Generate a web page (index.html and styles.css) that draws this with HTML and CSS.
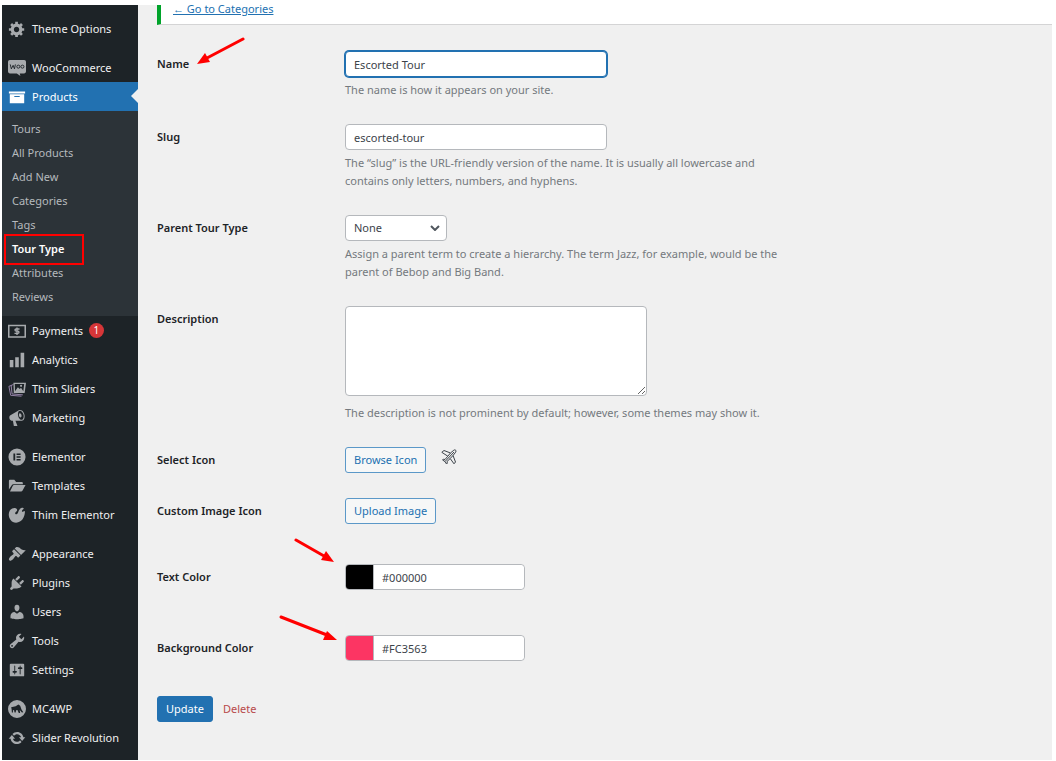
FILE: index.html
```html
<!DOCTYPE html>
<html lang="en">
	<head>
		<meta charset="UTF-8">
		<title>Edit Tour Type</title>
		<link rel="stylesheet" href="styles.css">
	</head>
	<body>
		<div class="admin">
			<nav class="sidebar">
				<ul class="menu">
					<li><a href="#"><svg viewBox="0 0 20 20"><path d="M18 12h-2.18c-.17.7-.44 1.35-.81 1.93l1.54 1.54-2.1 2.1-1.54-1.54c-.58.36-1.23.63-1.91.79V19H8v-2.18c-.68-.16-1.33-.43-1.91-.79l-1.54 1.54-2.12-2.12 1.54-1.54c-.36-.58-.63-1.23-.79-1.91H1V9.03h2.17c.16-.7.44-1.35.8-1.94L2.43 5.55l2.1-2.1 1.54 1.54c.58-.37 1.24-.64 1.93-.81V2h3v2.18c.68.16 1.33.43 1.91.79l1.54-1.54 2.12 2.12-1.54 1.54c.36.59.64 1.24.8 1.94H18V12zm-8.5 1.5c1.66 0 3-1.34 3-3s-1.34-3-3-3-3 1.34-3 3 1.34 3 3 3z"/></svg>Theme Options</a></li>
					<li class="gap"><a href="#"><svg viewBox="0 0 20 20"><path d="M2 1h16a2 2 0 0 1 2 2v11a2 2 0 0 1-2 2h-5l.8 3-4-3H2a2 2 0 0 1-2-2V3a2 2 0 0 1 2-2z"/><path class="ink" d="M2.500 6l1.200 5 2-4 1.500 4 1-5"/><circle class="ink" cx="11.500" cy="8.500" r="1.700"/><circle class="ink" cx="16" cy="8.500" r="1.700"/></svg>WooCommerce</a></li>
					<li class="current"><a href="#"><svg viewBox="0 0 20 20"><path d="M19 4v2H1V4h18zM2 7h16v10H2V7zm11 3V9H7v1h6z"/></svg>Products</a>
						<ul class="submenu">
							<li><a href="#">Tours</a></li>
							<li><a href="#">All Products</a></li>
							<li><a href="#">Add New</a></li>
							<li><a href="#">Categories</a></li>
							<li><a href="#">Tags</a></li>
							<li class="active"><a href="#">Tour Type</a></li>
							<li><a href="#">Attributes</a></li>
							<li><a href="#">Reviews</a></li>
						</ul>
					</li>
					<li><a href="#"><svg viewBox="0 0 20 20"><path fill-rule="evenodd" d="M0 3h20v14.500H0V3zm1.700 1.700v11.100h16.600V4.700z"/><path class="line dollar" d="M12.800 7.800H9a1.200 1.200 0 0 0 0 2.400h2a1.200 1.200 0 0 1 0 2.400H7.200M10 6v8.500"/></svg>Payments<span class="badge">1</span></a></li>
					<li><a href="#"><svg viewBox="0 0 20 20"><path d="M18 18V2h-4v16h4zm-6 0V7H8v11h4zm-6 0v-8H2v8h4z"/></svg>Analytics</a></li>
					<li><a href="#"><svg viewBox="0 0 20 20"><path class="line violet" d="M4 6L1 7l2 10 12 1M6 5L3.500 6l1 9.500 12 1"/><path d="M6 3h14l-1.500 11.500H6.500zm1.500 1.500l.3 8 3.200-4.500 2 2 1.500-1.500 2.500 4 1-8z"/><circle cx="14.500" cy="6.500" r="1.200"/></svg>Thim Sliders</a></li>
					<li><a href="#"><svg viewBox="0 0 20 20"><path d="M18.150 5.940c.46 1.620.38 3.220-.02 4.480-.42 1.280-1.260 2.180-2.300 2.480-.16.060-.26.060-.4.060-.06.020-.12.020-.18.020-.06.020-.14.020-.22.020h-6.800l2.220 5.500c.02.140-.06.260-.14.340-.08.100-.24.160-.34.160H6.950c-.1 0-.26-.06-.34-.16-.08-.08-.16-.2-.14-.34l-1-5.500H4.250l-.02-.02c-.5.060-1.080-.18-1.540-.62s-.88-1.080-1.060-1.880c-.24-.8-.2-1.560-.02-2.200.18-.62.58-1.080 1.060-1.300l.02-.02 9-5.400c.1-.06.18-.1.24-.16.060-.04.140-.08.240-.12.160-.08.280-.12.500-.18 1.040-.3 2.240.1 3.220.98s1.840 2.240 2.260 3.860zm-2.580 5.980h-.02c.4-.1.740-.34 1.040-.7.580-.7.860-1.760.860-3.040 0-.64-.1-1.300-.28-1.980-.34-1.360-1.020-2.500-1.780-3.240s-1.680-1.100-2.460-.88c-.82.220-1.400.960-1.700 2-.32 1.040-.28 2.360.06 3.720.38 1.360 1 2.500 1.800 3.240.78.740 1.620 1.100 2.480.88zm-2.540-7.080c.22-.04.42-.02.62.040.38.160.76.480 1.020 1s.42 1.200.42 1.780c0 .3-.04.560-.12.800-.18.480-.44.840-.86.940-.34.100-.8-.06-1.140-.4s-.64-.86-.78-1.500c-.18-.62-.12-1.240.02-1.720s.48-.84.820-.94z"/></svg>Marketing</a></li>
					<li class="gap"><a href="#"><svg viewBox="0 0 20 20"><path fill-rule="evenodd" d="M10 0.500a9.500 9.500 0 1 0 0 19 9.500 9.500 0 0 0 0-19zM6 6h2v8H6zm3.500 0H14v1.700H9.500zm0 3.200H14v1.700H9.500zm0 3.100H14V14H9.500z"/></svg>Elementor</a></li>
					<li><a href="#"><svg viewBox="0 0 20 20"><path d="M1 14V4.500C1 3.500 1.500 3 2.500 3H7l2 2.500h6c1 0 1.500.5 1.500 1.500v1H6.500c-1.200 0-2 .5-2.500 1.500zM2.200 16l3-6c.3-.6.700-1 1.500-1H19.500l-3.300 6c-.4.700-.9 1-1.700 1z"/></svg>Templates</a></li>
					<li><a href="#"><svg viewBox="0 0 20 20"><path d="M2 5c1.500-1.800 4-3.200 6.500-2.500 1.200.4 2 1.500 1.600 2.500-.5 1.300-1.800 1.500-2.100 2.700-.3 1.300.9 2 2 1.300 1.500-.8 1.200-3 2.500-4.800 1.500-2.200 4.600-2.700 5-1.500.3 1-1.700 1.500-2 2.800-.2 1 1 1.300 1.700.7.800-.8 1.700-.7 1.600.6C18.500 12.500 15.500 18.500 9 18.500 2 18.500-1 10 2 5z"/></svg>Thim Elementor</a></li>
					<li class="gap"><a href="#"><svg viewBox="0 0 20 20"><path d="M14.480 11.060L7.410 3.990l1.500-1.500c.5-.56 2.300-.47 3.510.32 1.210.8 1.430 1.280 2.910 2.100 1.180.64 2.450 1.260 4.450.85zm-.71.71L6.700 4.700 4.930 6.470c-.39.39-.39 1.020 0 1.410l1.060 1.060c.39.39.39 1.030 0 1.420-.6.6-1.430 1.110-2.210 1.690-.35.26-.7.53-1.010.84C1.430 14.230.4 16.080 1.400 17.070c.99 1 2.840-.03 4.180-1.360.31-.31.58-.66.85-1.020.57-.78 1.080-1.610 1.690-2.210.39-.39 1.020-.39 1.410 0l1.060 1.060c.39.39 1.020.39 1.410 0z"/></svg>Appearance</a></li>
					<li><a href="#"><svg viewBox="0 0 20 20"><path d="M13.110 4.360L9.870 7.600 8 5.730l3.240-3.240c.35-.34 1.050-.2 1.560.32.52.51.66 1.210.31 1.550zm-8 1.770l.91-1.120 9.010 9.010-1.190.84c-.71.71-2.630 1.160-3.820 1.160H6.140L4.900 17.260c-.59.59-1.540.59-2.120 0-.59-.58-.59-1.530 0-2.120l1.240-1.240v-3.880c0-1.130.4-3.190 1.090-3.890zm7.260 3.970l3.240-3.240c.34-.35 1.040-.21 1.550.31.52.51.66 1.210.31 1.550l-3.240 3.250z"/></svg>Plugins</a></li>
					<li><a href="#"><svg viewBox="0 0 20 20"><path d="M10 9.250c-2.270 0-2.730-3.440-2.730-3.440C7 4.020 7.820 2 9.970 2c2.160 0 2.980 2.020 2.710 3.810 0 0-.41 3.440-2.680 3.440zm0 2.570L12.720 10c2.390 0 4.520 2.330 4.520 4.530v2.490s-3.650 1.130-7.240 1.130c-3.650 0-7.240-1.130-7.240-1.130v-2.490c0-2.250 1.940-4.480 4.470-4.480z"/></svg>Users</a></li>
					<li><a href="#"><svg viewBox="0 0 20 20"><path d="M16.680 9.770c-1.340 1.340-3.300 1.670-4.950.99l-5.410 6.520c-.99.99-2.590.99-3.580 0s-.99-2.590 0-3.570l6.520-5.420c-.68-1.650-.35-3.610.99-4.950 1.280-1.280 3.120-1.620 4.720-1.060l-2.890 2.890 2.820 2.820 2.860-2.870c.53 1.580.18 3.390-1.080 4.650zM3.810 16.210c.4.39 1.040.39 1.430 0 .4-.4.4-1.040 0-1.430-.39-.4-1.030-.4-1.430 0-.39.39-.39 1.030 0 1.430z"/></svg>Tools</a></li>
					<li><a href="#"><svg viewBox="0 0 20 20"><path d="M18 16V4c0-.55-.45-1-1-1H3c-.55 0-1 .45-1 1v12c0 .55.45 1 1 1h14c.55 0 1-.45 1-1zM8 11h1c.55 0 1 .45 1 1s-.45 1-1 1H8v1.500c0 .28-.22.5-.5.5s-.5-.22-.5-.5V13H6c-.55 0-1-.45-1-1s.45-1 1-1h1V5.500c0-.28.22-.5.5-.5s.5.22.5.5V11zm5-2h-1c-.55 0-1-.45-1-1s.45-1 1-1h1V5.500c0-.28.22-.5.5-.5s.5.22.5.5V7h1c.55 0 1 .45 1 1s-.45 1-1 1h-1v5.500c0 .28-.22.5-.5.5s-.5-.22-.5-.5V9z"/></svg>Settings</a></li>
					<li class="gap"><a href="#"><svg viewBox="0 0 20 20"><path fill-rule="evenodd" d="M10 0a10 10 0 1 0 0 20 10 10 0 0 0 0-20zM3.500 8l5-1 3-2 2 1.500 1.500 4 2 3-1.500.5-2.500-3 .5 3.500H12L10.500 11 9 11.500 8.500 14H7.300l-.6-3-1.200.5V14H4.300L4 10z"/></svg>MC4WP</a></li>
					<li><a href="#"><svg viewBox="0 0 20 20"><path d="M10.200 3.280c3.530 0 6.430 2.610 6.920 6h2.080l-3.500 4-3.500-4h2.320c-.45-1.970-2.210-3.450-4.320-3.450-1.450 0-2.730.71-3.540 1.780L4.950 5.660C6.230 4.200 8.110 3.280 10.200 3.280zm-.4 13.440c-3.520 0-6.430-2.610-6.920-6H.8l3.500-4c1.170 1.330 2.330 2.670 3.500 4H5.480c.45 1.970 2.210 3.450 4.320 3.450 1.450 0 2.730-.71 3.540-1.780l1.710 1.950c-1.280 1.460-3.150 2.380-5.250 2.380z"/></svg>Slider Revolution</a></li>
				</ul>
			</nav>
			<main class="content">
				<div class="notice"><a href="#">← Go to Categories</a></div>
				<form class="edit-form">
					<div class="row">
						<label for="name">Name</label>
						<div class="field">
							<input type="text" id="name" class="focused" value="Escorted Tour">
							<p>The name is how it appears on your site.</p>
						</div>
						<svg class="arrow arrow-name" viewBox="0 0 48 28"><path d="M46 2L10 21"/><path class="head" d="M0 27l8-11 5 9z"/></svg>
					</div>
					<div class="row">
						<label for="slug">Slug</label>
						<div class="field">
							<input type="text" id="slug" value="escorted-tour">
							<p>The “slug” is the URL-friendly version of the name. It is usually all lowercase and<br>contains only letters, numbers, and hyphens.</p>
						</div>
					</div>
					<div class="row">
						<label for="parent">Parent Tour Type</label>
						<div class="field">
							<div class="select">
								<select id="parent"><option>None</option></select>
								<svg viewBox="0 0 10 6"><path d="M1 1l4 4 4-4"/></svg>
							</div>
							<p>Assign a parent term to create a hierarchy. The term Jazz, for example, would be the<br>parent of Bebop and Big Band.</p>
						</div>
					</div>
					<div class="row">
						<label for="description">Description</label>
						<div class="field">
							<textarea id="description"></textarea>
							<p class="below-area">The description is not prominent by default; however, some themes may show it.</p>
						</div>
					</div>
					<div class="row">
						<label for="browse">Select Icon</label>
						<div class="field inline">
							<button type="button" id="browse" class="button">Browse Icon</button>
							<svg class="plane" viewBox="0 0 16 16"><path d="M3 1.500L9.500 4l3.300-2.800c.9-.7 2.200-.2 2.200.8 0 .7-.3 1.200-.8 1.800L12 6.500l2.500 6.500-1.500 1.800-3.800-5.300L6 12.500l.3 1.700-.8.8L4 12.500 1.500 11l.8-.8 1.700.3L6.800 7.200.8 3.300z"/><path d="M4 12.500L13 3M9.500 4L6.800 7.200M12 6.500L9.200 9.500"/></svg>
						</div>
					</div>
					<div class="row">
						<label for="upload">Custom Image Icon</label>
						<div class="field">
							<button type="button" id="upload" class="button">Upload Image</button>
						</div>
					</div>
					<div class="row color-row">
						<label for="text-color">Text Color</label>
						<div class="field">
							<div class="color"><span class="swatch black"></span><input type="text" id="text-color" value="#000000"></div>
						</div>
						<svg class="arrow arrow-text" viewBox="0 0 40 24"><path d="M2 2l28 16"/><path class="head" d="M40 24l-13-2 5-9z"/></svg>
					</div>
					<div class="row color-row">
						<label for="bg-color">Background Color</label>
						<div class="field">
							<div class="color"><span class="swatch pink"></span><input type="text" id="bg-color" value="#FC3563"></div>
						</div>
						<svg class="arrow arrow-bg" viewBox="0 0 58 26"><path d="M2 2l46 18"/><path class="head" d="M58 25l-14 0 4-9z"/></svg>
					</div>
					<div class="actions">
						<button type="submit" class="button primary">Update</button>
						<a href="#" class="delete">Delete</a>
					</div>
				</form>
			</main>
		</div>
	</body>
</html>
```
FILE: styles.css
```css
*,*::after{box-sizing:border-box;margin:0;padding:0}
body{background:#fff;font:11px/18px "Noto Sans","Open Sans",sans-serif;color:#3c434a;}
ul{list-style:none;}
a{color:#2271b1;}
input,select,textarea,button{font:inherit;color:inherit;}

.admin{display:flex;min-height:calc(100vh - 6px);margin:5px 4px 1px 2px;background:#f0f0f0;}

/* sidebar */
.sidebar{flex:none;width:136px;padding-top:9px;background:#1d2327;}
.menu a{display:flex;align-items:center;color:#f0f0f1;text-decoration:none;white-space:nowrap;}
.menu > li > a{position:relative;height:29px;padding-left:6px;gap:6px;}
.menu svg{flex:none;width:18px;height:18px;fill:#a7aaad;}
.menu .ink{fill:none;stroke:#1d2327;stroke-width:1;}
.menu .line{fill:none;stroke:#a7aaad;stroke-width:1;}
.menu .dollar{stroke-width:1.5;}
.menu .violet{stroke:#a08cb4;}
.menu .gap{margin-top:10px;}
.menu .current > a{background:#2271b1;color:#fff;}
.menu .current svg{fill:#fff;}
.current > a::after{content:"";position:absolute;right:0;top:7px;border:7px solid transparent;border-left:0;border-right-color:#f0f0f0;}
.submenu{padding:6px 0 7px;background:#2c3338;}
.submenu a{height:24px;padding-left:10px;color:#b5b9bd;}
.submenu .active{position:relative;}
.submenu .active a{color:#fff;font-weight:600;}
.submenu .active::after{content:"";position:absolute;left:2px;top:-3px;width:80px;height:31px;border:2px solid #f00;}
.badge{width:15px;height:15px;border-radius:8px;background:#d63638;color:#fff;font-size:10px;line-height:15px;text-align:center;}

/* content */
.content{flex:1;min-width:0;padding-left:19px;}
.notice{height:20px;padding-left:12px;background:#fff;border-left:4px solid #00a32a;border-bottom:1px solid #d4d4d5;}
.notice a{display:block;line-height:8px;}
.edit-form{display:flex;flex-direction:column;gap:25px;padding-top:26px;}
.row{position:relative;display:grid;grid-template-columns:188px 1fr;}
.row label{line-height:26px;font-weight:600;color:#1d2327;}
.field p{margin-top:4px;color:#74797e;}
.field .below-area{margin-top:8px;}
.inline{display:flex;gap:15px;}
.field input,.field textarea,.field select{display:block;background:#fff;border:1px solid #b5b8bc;border-radius:4px;outline:0;}
.field input{width:262px;height:26px;padding:0 8px;}
.field .focused{border-color:#2271b1;box-shadow:0 0 0 1px #2271b1;}
.field textarea{width:302px;height:90px;}
.select{position:relative;width:102px;}
.field select{width:100%;height:26px;padding-left:8px;appearance:none;}
.select svg{position:absolute;right:7px;top:10px;width:10px;height:6px;fill:none;stroke:#50575e;stroke-width:2;pointer-events:none;}
.button{height:26px;padding:0 8px;background:#f6f7f7;border:1px solid #5b98c8;border-radius:3px;color:#2271b1;}
.plane{width:16px;height:16px;margin-top:2px;fill:none;stroke:#3c434a;stroke-width:1;stroke-linejoin:round;}
.color-row{padding:15px 0 5px;}
.color{display:flex;width:180px;height:26px;background:#fff;border:1px solid #b5b8bc;border-radius:4px;overflow:hidden;}
.swatch{flex:none;width:28px;border-right:1px solid #b5b8bc;}
.swatch.black{background:#000;}
.swatch.pink{background:#fc3563;}
.color .swatch + input{flex:1;width:auto;min-width:0;height:24px;border:0;}
.actions{display:flex;align-items:center;gap:10px;padding-top:5px;}
.primary{background:#2271b1;border-color:#2271b1;color:#fff;}
.delete{color:#b8494b;text-decoration:none;}

/* pointers drawn over the form */
.arrow{position:absolute;fill:none;stroke:#f00;stroke-width:3;stroke-linecap:round;}
.arrow .head{fill:#f00;stroke:none;}
.arrow-name{left:40px;top:-14px;width:48px;height:28px;}
.arrow-text{left:137px;top:-11px;width:40px;height:24px;}
.arrow-bg{left:122px;top:-5px;width:58px;height:26px;}
```
